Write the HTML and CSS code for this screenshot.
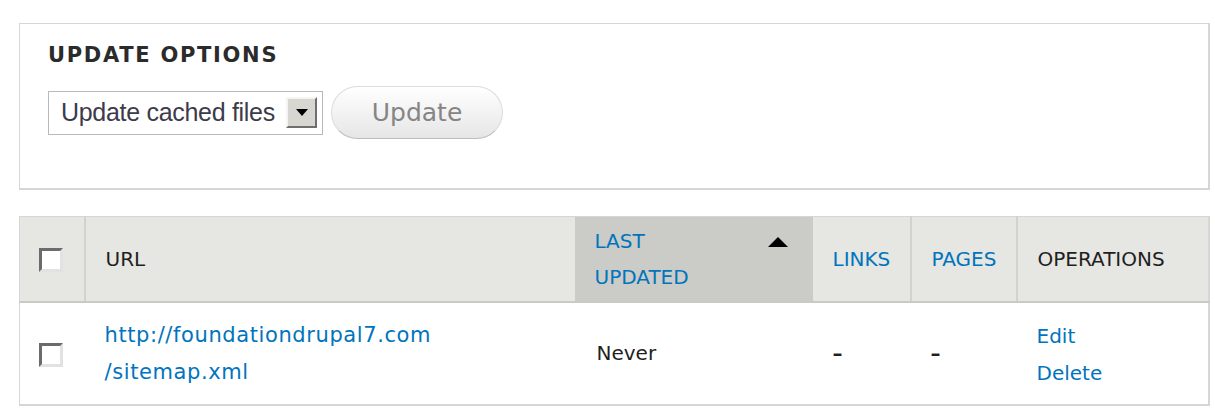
FILE: index.html
```html
<!DOCTYPE html>
<html lang="en">
<head>
    <meta charset="UTF-8">
    <title>XML sitemap</title>
    <link rel="stylesheet" href="styles.css">
</head>
<body>
    <fieldset class="options">
        <h2>Update options</h2>
        <div class="options-row">
            <div class="select">
                <span class="select-value">Update cached files</span>
                <span class="select-arrow"></span>
            </div>
            <button class="button" type="button">Update</button>
        </div>
    </fieldset>

    <table class="sitemaps">
        <colgroup>
            <col class="col-check">
            <col class="col-url">
            <col class="col-updated">
            <col class="col-links">
            <col class="col-pages">
            <col class="col-ops">
        </colgroup>
        <thead>
            <tr>
                <th class="check"><span class="checkbox"></span></th>
                <th>URL</th>
                <th class="active">
                    <div class="sort">
                        <a href="#">Last<br>updated</a>
                        <span class="sort-arrow"></span>
                    </div>
                </th>
                <th><a href="#">Links</a></th>
                <th><a href="#">Pages</a></th>
                <th>Operations</th>
            </tr>
        </thead>
        <tbody>
            <tr>
                <td class="check"><span class="checkbox"></span></td>
                <td><a href="#">http://foundationdrupal7.com<br>/sitemap.xml</a></td>
                <td>Never</td>
                <td class="empty">–</td>
                <td class="empty">–</td>
                <td class="ops"><a href="#">Edit</a><br><a href="#">Delete</a></td>
            </tr>
        </tbody>
    </table>
</body>
</html>
```

FILE: styles.css
```css
body {
    margin: 0;
    padding: 23px 5px 0 19px;
    background: #fff;
    color: #333;
    font-family: "DejaVu Sans", Verdana, sans-serif;
}

a {
    color: #0074bd;
    text-decoration: none;
}

/* fieldset with the update form */
.options {
    box-sizing: border-box;
    width: 1191px;
    height: 167px;
    margin: 0;
    padding: 19px 28px 0;
    border: 1px solid #d6d6d6;
    border-right-width: 2px;
    border-bottom-width: 2px;
}

.options h2 {
    margin: 0 0 19px;
    font-size: 21px;
    line-height: 24px;
    letter-spacing: 1.7px;
    text-transform: uppercase;
    color: #2b2b2b;
}

.options-row {
    display: flex;
    align-items: center;
    gap: 8px;
}

.select {
    box-sizing: border-box;
    width: 275px;
    height: 44px;
    display: flex;
    align-items: center;
    justify-content: space-between;
    padding: 0 5px 0 12px;
    border: 1px solid #b9b9b9;
    background: #fff;
}

.select-value {
    font-family: "Liberation Sans", Arial, sans-serif;
    font-size: 25px;
    letter-spacing: -0.3px;
    color: #3d3b4a;
}

/* classic raised dropdown button */
.select-arrow {
    position: relative;
    box-sizing: border-box;
    width: 31px;
    height: 31px;
    background: #d8d6d0;
    border: 2px solid;
    border-color: #f4f4f2 #6e6e6e #6e6e6e #f4f4f2;
}

.select-arrow::after {
    content: "";
    position: absolute;
    left: 8px;
    top: 10px;
    border-left: 6px solid transparent;
    border-right: 6px solid transparent;
    border-top: 7px solid #000;
}

.button {
    box-sizing: border-box;
    width: 172px;
    height: 53px;
    padding: 0;
    border: 1px solid #dcdcdc;
    border-bottom-color: #bdbdbd;
    border-radius: 27px;
    background: linear-gradient(#ffffff, #e6e6e6);
    font-family: "DejaVu Sans", Verdana, sans-serif;
    font-size: 25px;
    color: #858585;
}

/* sitemap list */
.sitemaps {
    width: 1191px;
    margin-top: 26px;
    border-collapse: collapse;
    table-layout: fixed;
    border: 1px solid #d6d6d6;
    border-right-width: 2px;
    border-bottom-width: 2px;
}

.col-check { width: 65px; }
.col-url { width: 490px; }
.col-updated { width: 238px; }
.col-links { width: 98px; }
.col-pages { width: 106px; }
.col-ops { width: auto; }

.sitemaps th {
    height: 84px;
    padding: 0 20px;
    background: #e6e6e2;
    border-left: 2px solid #d2d2ce;
    border-bottom: 2px solid #c9c9c5;
    text-align: left;
    font-weight: normal;
    font-size: 20px;
    text-transform: uppercase;
    color: #1f1f1f;
}

.sitemaps th:first-child {
    border-left: none;
}

.sitemaps th.active {
    background: #cbcbc7;
    border-left: none;
}

.sitemaps th.active + th {
    border-left: none;
}

.sort {
    display: flex;
    justify-content: space-between;
    align-items: flex-start;
    line-height: 36px;
}

.sort-arrow {
    margin: 14px 5px 0 0;
    border-left: 10px solid transparent;
    border-right: 10px solid transparent;
    border-bottom: 10px solid #000;
}

.sitemaps td {
    height: 101px;
    padding: 0 20px;
    font-size: 20px;
    line-height: 37px;
    color: #1f1f1f;
}

.sitemaps td:nth-child(3) {
    padding-left: 22px;
}

.sitemaps td:nth-child(2) a {
    font-size: 21px;
    letter-spacing: 0.6px;
}

.sitemaps .empty {
    font-weight: bold;
}

.sitemaps .ops {
    height: 98px;
    padding-top: 3px;
}

.sitemaps .check {
    padding: 0 0 0 19px;
}

/* sunken checkbox */
.checkbox {
    display: block;
    box-sizing: border-box;
    width: 24px;
    height: 24px;
    background: #fff;
    border: 3px solid;
    border-color: #6b6b6b #e2e2e2 #e2e2e2 #6b6b6b;
}

.sitemaps th .checkbox,
.sitemaps td .checkbox {
    margin-top: 2px;
}
```
